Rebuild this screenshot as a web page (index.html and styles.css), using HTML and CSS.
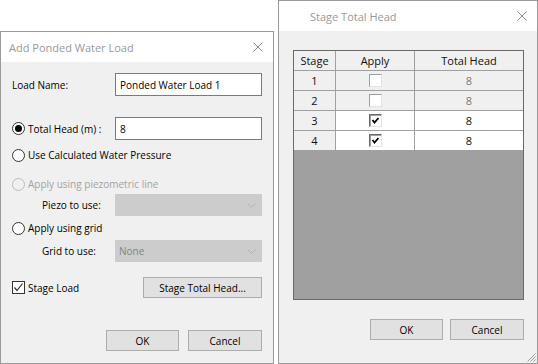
FILE: index.html
```html
<!DOCTYPE html>
<html lang="en">
<head>
    <meta charset="UTF-8">
    <title>Ponded Water Load</title>
    <link rel="stylesheet" href="styles.css">
</head>
<body>
<div class="screen">

    <!-- Add Ponded Water Load dialog -->
    <div class="dialog dialog-ponded">
        <div class="titlebar">
            <span>Add Ponded Water Load</span>
            <svg class="close" width="10" height="10" viewBox="0 0 10 10"><path d="M0.5 0.5L9.5 9.5M9.5 0.5L0.5 9.5" stroke="#8c8c8c" stroke-width="1"/></svg>
        </div>
        <div class="form">
            <div class="row row-name">
                <span>Load Name:</span>
                <div class="textbox">Ponded Water Load 1</div>
            </div>
            <div class="row row-head">
                <span class="radio checked"></span>
                <span>Total Head (m) :</span>
                <div class="textbox">8</div>
            </div>
            <div class="row row-calc">
                <span class="radio"></span>
                <span>Use Calculated Water Pressure</span>
            </div>
            <div class="row row-piezo disabled">
                <span class="radio"></span>
                <span>Apply using piezometric line</span>
            </div>
            <div class="row row-pick">
                <span class="sub-label">Piezo to use:</span>
                <div class="combo">
                    <span></span>
                    <svg class="chevron" width="9" height="5" viewBox="0 0 9 5"><path d="M0.5 0.5L4.5 4.5L8.5 0.5" fill="none" stroke="#b4b4b4"/></svg>
                </div>
            </div>
            <div class="row row-grid">
                <span class="radio"></span>
                <span>Apply using grid</span>
            </div>
            <div class="row row-pick row-pick-grid">
                <span class="sub-label">Grid to use:</span>
                <div class="combo">
                    <span>None</span>
                    <svg class="chevron" width="9" height="5" viewBox="0 0 9 5"><path d="M0.5 0.5L4.5 4.5L8.5 0.5" fill="none" stroke="#b4b4b4"/></svg>
                </div>
            </div>
            <div class="row row-stage">
                <span class="check">
                    <svg width="11" height="11" viewBox="0 0 11 11"><path d="M1.5 5.5L4 8.5L9.5 1.5" fill="none" stroke="#333" stroke-width="1.2"/></svg>
                </span>
                <span>Stage Load</span>
                <button class="btn btn-stage">Stage Total Head...</button>
            </div>
            <div class="row row-actions">
                <button class="btn btn-ok">OK</button>
                <button class="btn btn-cancel">Cancel</button>
            </div>
        </div>
    </div>

    <!-- Stage Total Head dialog -->
    <div class="dialog dialog-stage">
        <div class="titlebar">
            <span>Stage Total Head</span>
            <svg class="close" width="10" height="10" viewBox="0 0 10 10"><path d="M0.5 0.5L9.5 9.5M9.5 0.5L0.5 9.5" stroke="#8c8c8c" stroke-width="1"/></svg>
        </div>
        <div class="stage-body">
            <div class="table">
                <div class="grid">
                    <div class="cell">Stage</div>
                    <div class="cell">Apply</div>
                    <div class="cell">Total Head</div>

                    <div class="cell">1</div>
                    <div class="cell"><span class="box"></span></div>
                    <div class="cell off">8</div>

                    <div class="cell">2</div>
                    <div class="cell"><span class="box"></span></div>
                    <div class="cell off">8</div>

                    <div class="cell">3</div>
                    <div class="cell on"><span class="box ticked"><svg width="9" height="9" viewBox="0 0 9 9"><path d="M1.5 4L3.5 6.5L7.5 2" fill="none" stroke="#000" stroke-width="1.8"/></svg></span></div>
                    <div class="cell on">8</div>

                    <div class="cell">4</div>
                    <div class="cell on"><span class="box ticked"><svg width="9" height="9" viewBox="0 0 9 9"><path d="M1.5 4L3.5 6.5L7.5 2" fill="none" stroke="#000" stroke-width="1.8"/></svg></span></div>
                    <div class="cell on">8</div>
                </div>
            </div>
            <div class="row row-actions stage-actions">
                <button class="btn btn-ok">OK</button>
                <button class="btn btn-cancel">Cancel</button>
            </div>
        </div>
        <!-- resize grip -->
        <svg class="grip" width="11" height="11" viewBox="0 0 11 11"><path d="M10.5 2.5L2.5 10.5M10.5 5.5L5.5 10.5M10.5 8.5L8.5 10.5" stroke="#9c9c9c"/></svg>
    </div>

</div>
</body>
</html>
```

FILE: styles.css
```css
/* Page */
body {
    margin: 0;
    background: #fff;
    font-family: "Open Sans", sans-serif;
    font-size: 10px;
    color: #000;
}
.screen {
    display: flex;
    align-items: flex-start;
    width: 538px;
    height: 364px;
    overflow: hidden;
}

/* Dialog frame */
.dialog {
    box-sizing: border-box;
    border: 1px solid #9a9a9a;
    background: #f0f0f0;
    display: flex;
    flex-direction: column;
}
.dialog-ponded {
    width: 274px;
    height: 333px;
    margin-top: 31px;
}
.dialog-stage {
    width: 260px;
    height: 364px;
    margin-left: 4px;
    position: relative;
}
.titlebar {
    flex: none;
    height: 30px;
    background: #fff;
    display: flex;
    align-items: center;
    color: #999;
    font-size: 11px;
}
.dialog-ponded .titlebar {
    padding-left: 8px;
}
.dialog-stage .titlebar {
    padding-left: 31px;
}
.close {
    margin-left: auto;
    margin-right: 10px;
}

/* Form rows */
.form {
    padding: 11px 11px 0;
    display: flex;
    flex-direction: column;
}
.row {
    display: flex;
    align-items: center;
}
.row-name { height: 23px; }
.row-head { height: 23px; margin-top: 21px; }
.row-calc { height: 16px; margin-top: 7px; }
.row-piezo { height: 16px; margin-top: 13px; }
.row-pick { height: 22px; margin-top: 2px; }
.row-grid { height: 16px; margin-top: 4px; }
.row-pick-grid { margin-top: 4px; }
.row-stage { height: 21px; margin-top: 15px; }
.row-actions {
    height: 21px;
    margin-top: 32px;
    justify-content: flex-end;
    gap: 9px;
}
.disabled {
    color: #a3a3a3;
}
.sub-label {
    margin-left: 30px;
}

/* Radio and check boxes */
.radio {
    box-sizing: border-box;
    width: 13px;
    height: 13px;
    border: 1px solid #333;
    border-radius: 50%;
    background: #fff;
    margin-right: 3px;
    display: flex;
    align-items: center;
    justify-content: center;
}
.radio.checked::after {
    content: "";
    width: 7px;
    height: 7px;
    border-radius: 50%;
    background: #000;
}
.disabled .radio {
    border-color: #bcbcbc;
    background: #f0f0f0;
}
.check {
    box-sizing: border-box;
    width: 13px;
    height: 13px;
    border: 1px solid #333;
    background: #fff;
    margin-right: 3px;
    display: flex;
}

/* Inputs */
.textbox {
    box-sizing: border-box;
    margin-left: auto;
    width: 147px;
    height: 23px;
    border: 1px solid #7a7a7a;
    background: #fff;
    padding-left: 4px;
    display: flex;
    align-items: center;
}
.combo {
    box-sizing: border-box;
    margin-left: auto;
    width: 147px;
    height: 22px;
    border: 1px solid #ccc;
    background: #ccc;
    color: #838383;
    padding-left: 3px;
    display: flex;
    align-items: center;
}
.chevron {
    margin-left: auto;
    margin-right: 5px;
}

/* Buttons */
.btn {
    box-sizing: border-box;
    height: 21px;
    border: 1px solid #adadad;
    background: #e1e1e1;
    font-family: inherit;
    font-size: 10px;
    color: #000;
    padding: 0;
}
.btn-stage {
    margin-left: auto;
    width: 119px;
}
.btn-ok { width: 73px; }
.btn-cancel { width: 74px; }

/* Stage table */
.stage-body {
    padding: 19px 13px 0 14px;
    display: flex;
    flex-direction: column;
}
.table {
    box-sizing: border-box;
    width: 231px;
    height: 250px;
    border: 1px solid #696969;
    background: #a0a0a0;
}
.grid {
    display: grid;
    grid-template-columns: 42px 79px 108px;
}
.cell {
    box-sizing: border-box;
    height: 20px;
    border-right: 1px solid #a0a0a0;
    border-bottom: 1px solid #a0a0a0;
    background: #f0f0f0;
    display: flex;
    align-items: center;
    justify-content: center;
    font-size: 11px;
    color: #111;
}
.cell:nth-child(3n) {
    border-right: 0;
}
.cell.off {
    color: #7a7a7a;
}
.cell.on {
    background: #fff;
}
.box {
    box-sizing: border-box;
    width: 13px;
    height: 13px;
    border: 1px solid;
    border-color: #a0a0a0 #e3e3e3 #e3e3e3 #a0a0a0;
    background: #fff;
    display: flex;
    align-items: center;
    justify-content: center;
}
.box.ticked {
    border-color: #696969 #e3e3e3 #e3e3e3 #696969;
    box-shadow: inset 1px 1px 0 #a0a0a0;
}
.stage-actions {
    margin-top: 19px;
    gap: 7px;
}
.grip {
    position: absolute;
    right: 1px;
    bottom: 1px;
}
```
